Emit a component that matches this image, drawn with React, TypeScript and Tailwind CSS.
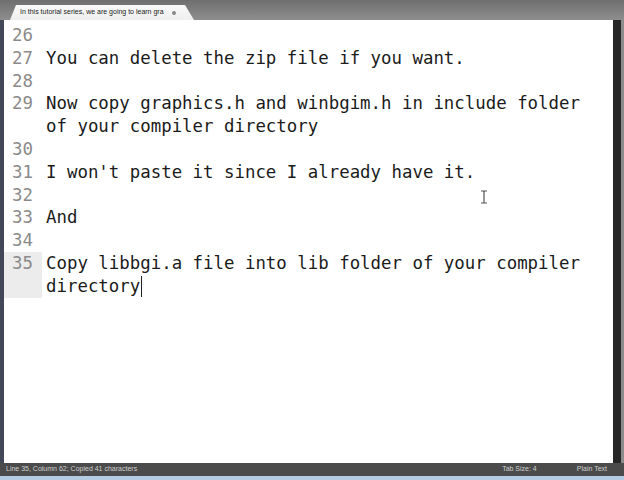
const lines: { num?: string; text: string; active?: boolean }[] = [
  { num: '26', text: '' },
  { num: '27', text: 'You can delete the zip file if you want.' },
  { num: '28', text: '' },
  { num: '29', text: 'Now copy graphics.h and winbgim.h in include folder' },
  { text: 'of your compiler directory' },
  { num: '30', text: '' },
  { num: '31', text: "I won't paste it since I already have it." },
  { num: '32', text: '' },
  { num: '33', text: 'And' },
  { num: '34', text: '' },
  { num: '35', text: 'Copy libbgi.a file into lib folder of your compiler', active: true },
  { text: 'directory', active: true },
];

export default function App() {
  return (
    <div className="w-[624px] h-[480px] flex flex-col overflow-hidden bg-[#7d7d7d]">
      {/* tab bar */}
      <div className="h-[20px] flex items-end bg-gradient-to-b from-[#6f6f6f] to-[#8e8e8e] pl-[10px]">
        <div className="h-[15px] w-[184px] bg-gradient-to-b from-[#fafafa] to-[#eeeeee] [clip-path:polygon(0_100%,6px_0,175px_0,184px_100%)] flex items-center pl-[10px] gap-[8px] font-['Liberation_Sans',sans-serif] text-[7px] text-[#222]">
          <span>In this tutorial series, we are going to learn gra</span>
          <span className="w-[4px] h-[4px] rounded-full bg-[#888]" />
        </div>
      </div>

      {/* editor */}
      <div className="flex-1 flex min-h-0">
        <div className="w-[4px] bg-[#424857]" />
        <div className="flex-1 bg-white pt-[4px] font-['DejaVu_Sans_Mono',monospace] text-[17.4px] relative">
          {lines.map((l, i) => (
            <div key={i} className="flex h-[22.8px] leading-[22.8px]">
              <div className={`w-[38px] shrink-0 text-right pr-[9px] text-[#8a8a8a] ${l.active ? 'bg-[#ececec]' : ''}`}>
                {l.num}
              </div>
              <div className="pl-[4px] whitespace-pre text-[#1b1b1b] flex items-center">
                {l.text}
                {i === lines.length - 1 && <span className="inline-block w-[1px] h-[21px] bg-[#222] ml-[1px]" />}
              </div>
            </div>
          ))}
          {/* mouse I-beam */}
          <svg className="absolute left-[475px] top-[170px]" width="10" height="14" viewBox="0 0 10 14">
            <path d="M2 1h2.5l.5.6.5-.6H8M2 13h2.5l.5-.6.5.6H8M5 1.6v10.8" stroke="#555" strokeWidth="1.2" fill="none" />
          </svg>
        </div>
        <div className="w-[8px] bg-[#262626]" />
        <div className="w-[3px] bg-[#8c8c8c]" />
      </div>

      {/* status bar */}
      <div className="h-[13px] bg-[#4b4b4b] flex items-center font-['Liberation_Sans',sans-serif] text-[7px] text-[#cfcfcf] pl-[6px]">
        <span>Line 35, Column 62; Copied 41 characters</span>
        <span className="ml-auto mr-[40px]">Tab Size: 4</span>
        <span className="mr-[17px]">Plain Text</span>
      </div>
      <div className="h-[4px] bg-[#b4cce2]" />
    </div>
  );
}
